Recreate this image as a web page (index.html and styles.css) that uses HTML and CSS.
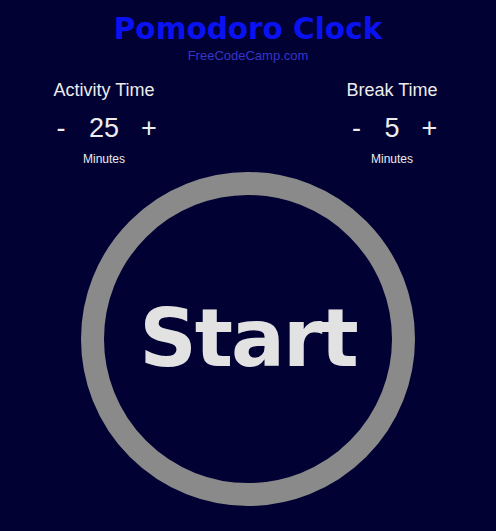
FILE: index.html
```html
<!DOCTYPE html>
<html>
<head>
<meta charset="utf-8">
<link rel="stylesheet" href="styles.css">
</head>
<body>
<div class="page">
  <header class="head">
    <h1 class="title">Pomodoro Clock</h1>
    <div class="sub">FreeCodeCamp.com</div>
  </header>
  <div class="settings">
    <div class="setting">
      <div class="label">Activity Time</div>
      <div class="controls"><span class="btn">-</span><span class="val">25</span><span class="btn">+</span></div>
      <div class="unit">Minutes</div>
    </div>
    <div class="setting">
      <div class="label">Break Time</div>
      <div class="controls"><span class="btn">-</span><span class="val">5</span><span class="btn">+</span></div>
      <div class="unit">Minutes</div>
    </div>
  </div>
  <div class="ring">
    <span class="start">Start</span>
  </div>
</div>
</body>
</html>
```
FILE: styles.css
```css
html, body {
  margin: 0;
  padding: 0;
  background: #010133;
  width: 496px;
  height: 531px;
  overflow: hidden;
}
.page {
  display: flex;
  flex-direction: column;
  align-items: center;
  font-family: "Liberation Sans", Arial, sans-serif;
  color: #ececec;
}
.head {
  display: flex;
  flex-direction: column;
  align-items: center;
  padding-top: 11px;
}
.title {
  margin: 0;
  font-family: "DejaVu Sans", sans-serif;
  font-size: 29.5px;
  line-height: 36px;
  font-weight: bold;
  color: #0b12f2;
}
.sub {
  font-size: 13px;
  line-height: 16px;
  color: #3535c8;
  margin-top: 1px;
}
.settings {
  align-self: stretch;
  display: flex;
  justify-content: space-between;
  padding: 0 38px 0 38px;
  margin-top: 16px;
}
.setting {
  width: 132px;
  display: flex;
  flex-direction: column;
  align-items: center;
}
.label {
  font-size: 18px;
  line-height: 20px;
}
.controls {
  display: flex;
  align-items: center;
  gap: 22px;
  margin-top: 13px;
  font-size: 27px;
  line-height: 30px;
}
.btn { width: 12px; text-align: center; }
.unit {
  font-size: 12px;
  line-height: 14px;
  margin-top: 9px;
}
.ring {
  margin-top: 6px;
  width: 334px;
  height: 334px;
  box-sizing: border-box;
  border: 23px solid #8a8a8a;
  border-radius: 50%;
  display: flex;
  align-items: center;
  justify-content: center;
}
.start {
  font-family: "DejaVu Sans", sans-serif;
  font-size: 80px;
  font-weight: bold;
  letter-spacing: -2px;
  color: #e2e2e2;
  line-height: 1;
}
```
